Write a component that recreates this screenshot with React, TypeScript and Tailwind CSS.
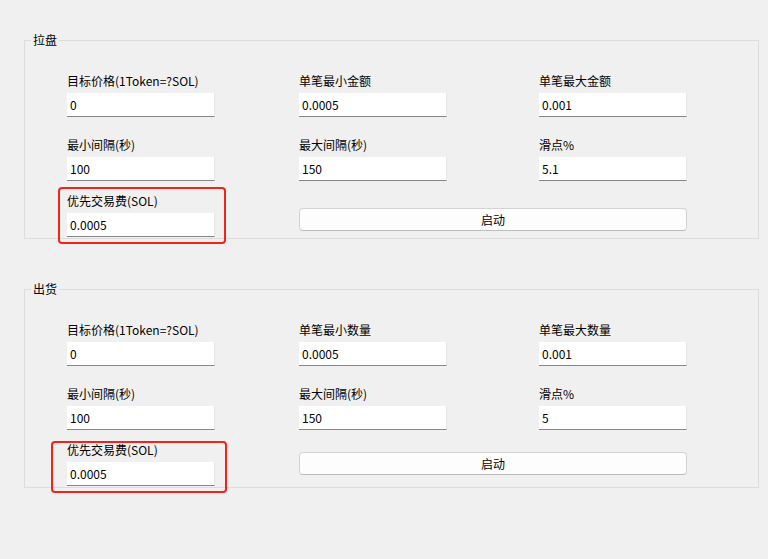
import React from "react";

type Field = { label: string; value: string };

const FONT = { fontFamily: '"Noto Sans CJK SC", "Noto Sans", sans-serif' };

function FieldBox({ f, w }: { f: Field; w: string }) {
  return (
    <div className={`flex flex-col ${w}`}>
      <div className="text-[12px] leading-[16px] text-black whitespace-nowrap">{f.label}</div>
      <div className="mt-[4px] w-[148px] h-[24px] bg-white border-b border-b-[#868686] border-r border-r-[#e4e4e4] pl-[3px] text-[12px] leading-[23px] text-black">
        {f.value}
      </div>
    </div>
  );
}

function Group({
  title,
  row1,
  row2,
  fee,
  btnTop,
  red,
}: {
  title: string;
  row1: Field[];
  row2: Field[];
  fee: Field;
  btnTop: string;
  red: string;
}) {
  return (
    <div className="relative w-[735px] h-[199px] border border-[#dcdcdc]">
      <span className="absolute left-[6px] top-[-9px] px-[2px] bg-[#f0f0f0] text-[12px] leading-[16px] text-black">
        {title}
      </span>
      <div className="flex flex-col pl-[42px] pt-[32px]">
        <div className="flex">
          <FieldBox f={row1[0]} w="w-[232px]" />
          <FieldBox f={row1[1]} w="w-[240px]" />
          <FieldBox f={row1[2]} w="w-[148px]" />
        </div>
        <div className="flex mt-[20px]">
          <FieldBox f={row2[0]} w="w-[232px]" />
          <FieldBox f={row2[1]} w="w-[240px]" />
          <FieldBox f={row2[2]} w="w-[148px]" />
        </div>
        <div className="flex mt-[12px]">
          <FieldBox f={fee} w="w-[232px]" />
          <div
            className={`${btnTop} w-[388px] h-[23px] bg-[#fdfdfd] border border-[#d3d3d3] border-b-[#bcbcbc] rounded-[4px] flex items-center justify-center text-[12px] leading-[16px] text-black`}
          >
            启动
          </div>
        </div>
      </div>
      <div className={`absolute ${red} border-[2.5px] border-[#f5221b] rounded-[4px]`} />
    </div>
  );
}

export default function App() {
  return (
    <div className="w-[768px] h-[559px] bg-[#f0f0f0] overflow-hidden" style={FONT}>
      <div className="flex flex-col pt-[40px] pl-[24px] gap-[50px]">
        <Group
          title="拉盘"
          row1={[
            { label: "目标价格(1Token=?SOL)", value: "0" },
            { label: "单笔最小金额", value: "0.0005" },
            { label: "单笔最大金额", value: "0.001" },
          ]}
          row2={[
            { label: "最小间隔(秒)", value: "100" },
            { label: "最大间隔(秒)", value: "150" },
            { label: "滑点%", value: "5.1" },
          ]}
          fee={{ label: "优先交易费(SOL)", value: "0.0005" }}
          btnTop="mt-[15px]"
          red="left-[33px] top-[146px] w-[168px] h-[57px]"
        />
        <Group
          title="出货"
          row1={[
            { label: "目标价格(1Token=?SOL)", value: "0" },
            { label: "单笔最小数量", value: "0.0005" },
            { label: "单笔最大数量", value: "0.001" },
          ]}
          row2={[
            { label: "最小间隔(秒)", value: "100" },
            { label: "最大间隔(秒)", value: "150" },
            { label: "滑点%", value: "5" },
          ]}
          fee={{ label: "优先交易费(SOL)", value: "0.0005" }}
          btnTop="mt-[10px]"
          red="left-[26px] top-[151px] w-[176px] h-[52px]"
        />
      </div>
    </div>
  );
}
